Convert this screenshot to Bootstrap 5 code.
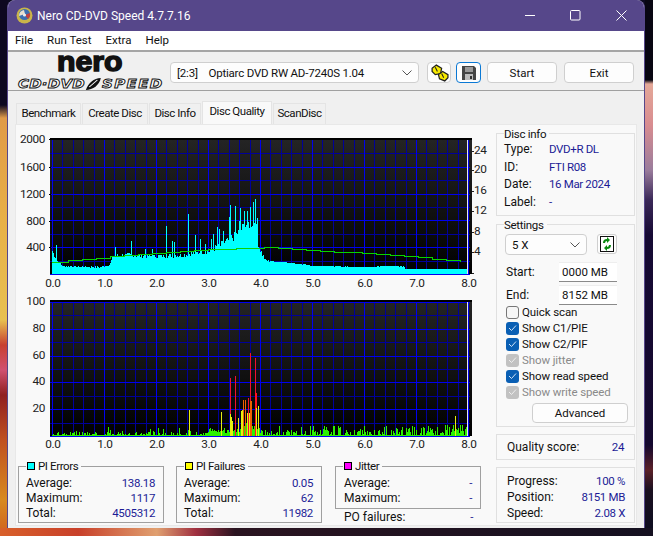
<!DOCTYPE html>
<html lang="en">
<head>
<meta charset="utf-8">
<title>Nero CD-DVD Speed</title>
<link href="https://cdn.jsdelivr.net/npm/bootstrap@5.3.0/dist/css/bootstrap.min.css" rel="stylesheet">
<style>
html,body{height:536px;overflow:hidden}
body{width:653px;font:12px/16px Roboto,"Liberation Sans",sans-serif;color:#111;background-color:#0c0a20;background-repeat:no-repeat;
background-image:
linear-gradient(90deg,#d8602a 0,#c8402a 12%,#e0a070 24%,#a03040 30%,#2a1420 36%,#141020 100%),
linear-gradient(180deg,#0d0820 0,#0d0820 105px,#e09a48 118px,#e8b048 220px,#e8c050 320px,#c84030 345px,#d05070 370px,#901f20 395px,#c05020 440px,#d88a20 500px,#d06020 536px),
linear-gradient(180deg,#080612 0,#080612 80px,#e4a898 84px,#d88c90 125px,#9a7c9c 170px,#3a2858 200px,#160a34 235px,#14082e 445px,#5a2028 470px,#1a1020 490px,#0c0c20 536px);
background-size:653px 8px,8px 536px,8px 536px;background-position:0 528px,0 0,645px 0}
.app-win{margin-left:7px;width:638px;height:528px;background:#f0f0f0;border-radius:8px 8px 0 0;overflow:hidden;border:solid #56478a;border-width:0 1px}
.title-row{height:31px;background:#56478a;color:#fff;font-size:12px;padding-left:8px;flex:none}
.win-ctl{width:45.5px;height:31px}
.menu-row{height:21px;background:#fff;border-bottom:2px solid #a5a5a5;gap:14px;padding-left:7px;font-size:11.5px;line-height:18px;flex:none}
.tool-row{height:39px;border-bottom:1px solid #a0a0a0;padding-top:3px;flex:none}
.logo-box{width:162px;position:relative;height:34px;align-self:flex-start;margin-top:-3px}
.logo-nero{position:absolute;left:49px;top:1px;font:900 28px/18px "Liberation Sans",sans-serif;color:#111;-webkit-text-stroke:1.500px #111;transform:scaleX(1.08);transform-origin:left center}
.logo-cd{position:absolute;left:10px;top:25px;font:italic 700 13px/12px "DejaVu Sans",sans-serif;color:#fff;-webkit-text-stroke:.9px #111;white-space:nowrap;transform:scaleX(1.15);transform-origin:left center}
.logo-cd1{letter-spacing:.2px}
.logo-cd2{letter-spacing:1.2px}
.fake-ctl{height:21px;background:#fdfdfd;border:1px solid #cfcfcf;border-radius:4px;color:#111;font-size:11.5px;line-height:20px}
.combo{width:249px;padding:0 6px;font-size:11.5px}
.combo-txt{letter-spacing:-.2px}
.ico-btn{width:24px;margin-left:8px}
.ico-btn.on{width:25px;border:1.5px solid #0a78d4;margin-left:5px}
.act-btn{width:70px;margin-left:6px}
.act-btn.lastb{margin-left:7px}
.tab-row{height:33px;padding:12px 0 0 8px;flex:none}
.tabbie{height:21px;background:#f0f0f0;border:1px solid #e4e4e4;border-bottom:0;margin-right:1px;line-height:19px;font-size:11.5px;letter-spacing:-.45px;text-align:center}
.tabbie.on{height:23px;background:#f9f9f9;margin-top:-2px;position:relative;z-index:1}
.t-a{width:65px}.t-b{width:66px}.t-c{width:52px}.t-d{width:70px}.t-e{width:53px}
.main-pane{margin-left:7px;width:622px;height:402px;background:#f9f9f9;border:1px solid #e8e8e8;flex:none}
.left-side{width:480px}
.chart-svg{display:block;overflow:visible}
.stat-row{gap:12px;padding-left:2px;margin-top:6px}
.grp-box{position:relative;width:146px;height:57px;border:1px solid #a0a0a0;padding:9px 8px 0 7px}
.grp-box.short{height:43px;padding-left:8px}
.grp-shift{margin-left:1px}
.grp-legend{position:absolute;left:7px;top:-8px;background:#f9f9f9;padding:0 3px 0 0;line-height:14px;font-size:11.5px;letter-spacing:-.4px}
.swatch{display:inline-block;width:8px;height:8px;border:1px solid #000;margin:0 3px 0 1px}
.kv{height:15px;line-height:15px}
.kv-val{color:#1c1c96;font-size:11.5px;letter-spacing:-.35px}
.po-line{width:146px;padding:1px 8px 0 9px;height:16px}
.right-side{width:139px}
.sec-box{border:1px solid #e0e0e0;position:relative;width:139px}
.sec-title{position:absolute;left:7px;top:-7px;background:#f9f9f9;padding:0 3px 0 0;line-height:14px;font-size:11.5px;letter-spacing:-.3px}
.info-line{height:17.700px;line-height:17.700px;padding-left:7px}
.info-key{width:45px}
.box-info{height:83px;margin-top:8px;padding-top:7px}
.box-set{height:203px;margin-top:8px;padding:9px 8px}
.spd{width:82px;padding:0 6px}
.ref-btn{width:20px;height:20px;margin-left:10px;border:1px solid #cfcfcf;border-radius:3px;background:#fdfdfd}
.speed-line{margin-bottom:5px}
.in-line{height:23px;padding:0 9px 0 1px}
.in-last{margin-bottom:-2px}
.fake-in{width:58px;height:20px;background:#fff;border-bottom:1px solid #8a8a8a;border-top:1px solid #eee;padding-left:3px;line-height:18px;font-size:11.5px}
.chk-line{height:16px;line-height:16px;margin-left:1px;font-size:11.5px;letter-spacing:-.1px}
.chk{width:13px;height:13px;border-radius:3px;margin-right:3px;flex:none}
.chk.off{border:1px solid #777;background:#f6f6f6}
.chk.blue{background:#0a5fb4}
.chk.gray{background:#c2c2c2}
.dim{color:#8a8a8a}
.adv{width:96px;height:20px;margin:3px 0 0 27px;line-height:18px}
.box-q{height:26px;margin-top:7px;padding:0 10px;line-height:25px}
.box-p{height:56px;margin-top:7px;padding:5px 9px 0 10px}
.box-p .kv{height:16px;line-height:16px}
</style>
</head>
<body>
<div class="app-win d-flex flex-column">
  <div class="title-row d-flex align-items-center">
    <svg width="17" height="17" viewBox="0 0 17 17" class="me-1"><circle cx="8.500" cy="8.500" r="8" fill="#c9b54a"/><circle cx="8.500" cy="7.500" r="5.500" fill="#3d6fb0"/><path d="M3 9a6 6 0 0 1 5-6l1 4z" fill="#e8e0d0"/><path d="M9 8l5-2a6 6 0 0 1-2 6z" fill="#c04040"/><circle cx="8.500" cy="8" r="1.600" fill="#eee"/></svg>
    <span class="flex-grow-1">Nero CD-DVD Speed 4.7.7.16</span>
    <span class="win-ctl d-flex align-items-center justify-content-center"><svg width="11" height="11"><path d="M0 5.500h10" stroke="#fff"/></svg></span>
    <span class="win-ctl d-flex align-items-center justify-content-center"><svg width="11" height="11"><rect x=".5" y=".5" width="9.500" height="9.500" rx="1" fill="none" stroke="#fff"/></svg></span>
    <span class="win-ctl d-flex align-items-center justify-content-center"><svg width="11" height="11"><path d="M.5.500l10 10M10.500.500l-10 10" stroke="#fff"/></svg></span>
  </div>
  <div class="menu-row d-flex"><span>File</span><span>Run Test</span><span>Extra</span><span>Help</span></div>
  <div class="tool-row d-flex align-items-center">
    <div class="logo-box">
      <span class="logo-nero">nero</span>
      <span class="logo-cd"><span class="logo-cd1">CD·DVD</span><svg width="15" height="14" viewBox="0 0 15 14" class="mx-0"><path d="M1 13C3 6 8 1 14 1 13 8 7 13 1 13z" fill="#111"/><path d="M4 10l7-7" stroke="#fff"/></svg><span class="logo-cd2">SPEED</span></span>
    </div>
    <div class="fake-ctl combo d-flex align-items-center justify-content-between"><span class="combo-txt">[2:3]&nbsp;&nbsp;&nbsp; Optiarc DVD RW AD-7240S 1.04</span><svg width="10" height="6"><path d="M.5.500l4.500 4.500 4.500-4.500" fill="none" stroke="#555"/></svg></div>
    <div class="fake-ctl ico-btn d-flex align-items-center justify-content-center"><svg width="19" height="18" viewBox="0 0 18 17"><g fill="#f7ea00" stroke="#222" stroke-width="1.200"><path d="M2 4l4-3 5 3-1 5-5 1-3-3z"/><path d="M8 10l4-3 5 3v3l-3 3-5-2z"/></g><path d="M5 3l2 4M11 9l2 4" stroke="#222"/></svg></div>
    <div class="fake-ctl ico-btn on d-flex align-items-center justify-content-center"><svg width="14" height="14" viewBox="0 0 14 14"><path d="M0 0h12l2 2v12H0z" fill="#444"/><rect x="3" y="1" width="8" height="5" fill="#999"/><rect x="3" y="8" width="8" height="6" fill="#bbb"/><rect x="8" y="10" width="2" height="3" fill="#333"/></svg></div>
    <div class="fake-ctl act-btn text-center">Start</div>
    <div class="fake-ctl act-btn lastb text-center">Exit</div>
  </div>
  <div class="tab-row d-flex">
    <span class="tabbie t-a">Benchmark</span><span class="tabbie t-b">Create Disc</span><span class="tabbie t-c">Disc Info</span><span class="tabbie t-d on">Disc Quality</span><span class="tabbie t-e">ScanDisc</span>
  </div>
  <div class="main-pane d-flex">
    <div class="left-side">
      <svg id="c1" class="chart-svg" width="480" height="171" viewBox="16 125 480 171"></svg>
      <svg id="c2" class="chart-svg" width="480" height="164" viewBox="16 296 480 164"></svg>
      <div class="stat-row d-flex">
        <div class="grp-box">
          <div class="grp-legend"><i class="swatch" style="background:#00ffff"></i>PI Errors</div>
          <div class="kv d-flex justify-content-between"><span>Average:</span><span class="kv-val">138.18</span></div>
          <div class="kv d-flex justify-content-between"><span>Maximum:</span><span class="kv-val">1117</span></div>
          <div class="kv d-flex justify-content-between"><span>Total:</span><span class="kv-val">4505312</span></div>
        </div>
        <div class="grp-box">
          <div class="grp-legend"><i class="swatch" style="background:#ffff00"></i>PI Failures</div>
          <div class="kv d-flex justify-content-between"><span>Average:</span><span class="kv-val">0.05</span></div>
          <div class="kv d-flex justify-content-between"><span>Maximum:</span><span class="kv-val">62</span></div>
          <div class="kv d-flex justify-content-between"><span>Total:</span><span class="kv-val">11982</span></div>
        </div>
        <div class="grp-shift">
          <div class="grp-box short">
            <div class="grp-legend"><i class="swatch" style="background:#ff00ff"></i>Jitter</div>
            <div class="kv d-flex justify-content-between"><span>Average:</span><span class="kv-val">-</span></div>
            <div class="kv d-flex justify-content-between"><span>Maximum:</span><span class="kv-val">-</span></div>
          </div>
          <div class="po-line kv d-flex justify-content-between"><span>PO failures:</span><span class="kv-val">-</span></div>
        </div>
      </div>
    </div>
    <div class="right-side">
      <div class="sec-box box-info">
        <div class="sec-title">Disc info</div>
        <div class="info-line d-flex"><span class="info-key">Type:</span><span class="kv-val">DVD+R DL</span></div>
        <div class="info-line d-flex"><span class="info-key">ID:</span><span class="kv-val">FTI R08</span></div>
        <div class="info-line d-flex"><span class="info-key">Date:</span><span class="kv-val">16 Mar 2024</span></div>
        <div class="info-line d-flex"><span class="info-key">Label:</span><span class="kv-val">-</span></div>
      </div>
      <div class="sec-box box-set">
        <div class="sec-title">Settings</div>
        <div class="d-flex speed-line">
          <div class="fake-ctl spd d-flex align-items-center justify-content-between"><span>5 X</span><svg width="10" height="6"><path d="M.5.500l4.500 4.500 4.500-4.500" fill="none" stroke="#555"/></svg></div>
          <div class="ref-btn d-flex align-items-center justify-content-center"><svg width="14" height="16" viewBox="0 0 14 16"><rect x=".5" y=".5" width="13" height="15" fill="#fff" stroke="#111"/><path d="M3 7a4 4 0 0 1 4-4V1l3 3-3 3V5a2 2 0 0 0-2 2zM11 9a4 4 0 0 1-4 4v2l-3-3 3-3v2a2 2 0 0 0 2-2z" fill="#0a8a10"/></svg></div>
        </div>
        <div class="in-line d-flex align-items-center justify-content-between"><span>Start:</span><span class="fake-in">0000 MB</span></div>
        <div class="in-line in-last d-flex align-items-center justify-content-between"><span>End:</span><span class="fake-in">8152 MB</span></div>
        <div class="chk-line d-flex align-items-center"><span class="chk off"></span><span>Quick scan</span></div>
        <div class="chk-line d-flex align-items-center"><span class="chk blue d-flex align-items-center justify-content-center"><svg width="9" height="8"><path d="M1 4l2.500 2.500L8 1.500" fill="none" stroke="#cfe3f7"/></svg></span><span>Show C1/PIE</span></div>
        <div class="chk-line d-flex align-items-center"><span class="chk blue d-flex align-items-center justify-content-center"><svg width="9" height="8"><path d="M1 4l2.500 2.500L8 1.500" fill="none" stroke="#cfe3f7"/></svg></span><span>Show C2/PIF</span></div>
        <div class="chk-line d-flex align-items-center dim"><span class="chk gray d-flex align-items-center justify-content-center"><svg width="9" height="8"><path d="M1 4l2.500 2.500L8 1.500" fill="none" stroke="#eee"/></svg></span><span>Show jitter</span></div>
        <div class="chk-line d-flex align-items-center"><span class="chk blue d-flex align-items-center justify-content-center"><svg width="9" height="8"><path d="M1 4l2.500 2.500L8 1.500" fill="none" stroke="#cfe3f7"/></svg></span><span>Show read speed</span></div>
        <div class="chk-line d-flex align-items-center dim"><span class="chk gray d-flex align-items-center justify-content-center"><svg width="9" height="8"><path d="M1 4l2.500 2.500L8 1.500" fill="none" stroke="#eee"/></svg></span><span>Show write speed</span></div>
        <div class="fake-ctl adv text-center">Advanced</div>
      </div>
      <div class="sec-box box-q d-flex justify-content-between"><span>Quality score:</span><span class="kv-val">24</span></div>
      <div class="sec-box box-p">
        <div class="kv d-flex justify-content-between"><span>Progress:</span><span class="kv-val">100 %</span></div>
        <div class="kv d-flex justify-content-between"><span>Position:</span><span class="kv-val">8151 MB</span></div>
        <div class="kv d-flex justify-content-between"><span>Speed:</span><span class="kv-val">2.08 X</span></div>
      </div>
    </div>
  </div>
</div>
<script src="https://cdn.jsdelivr.net/npm/bootstrap@5.3.0/dist/js/bootstrap.bundle.min.js"></script>
<script>
(function(){
var x0=52,ux=52;
function rnd(s){var v=s;return function(){v=(v*9301+49297)%233280;return v/233280;};}
function lerp(t,u){if(u<=t[0][0])return t[0][1];for(var i=1;i<t.length;i++){if(u<=t[i][0]){var a=t[i-1],b=t[i];return a[1]+(b[1]-a[1])*(u-a[0])/(b[0]-a[0]);}}return t[t.length-1][1];}
function grid(id,top,bot,skipTop){
  var s='<defs><linearGradient id="'+id+'g" x1="0" y1="0" x2="0" y2="1"><stop offset="0" stop-color="#242424"/><stop offset="1" stop-color="#000"/></linearGradient></defs>';
  s+='<rect x="50" y="'+(top-2)+'" width="422" height="'+(bot-top+2)+'" fill="#000"/><rect x="50" y="'+top+'" width="422" height="'+(bot-top)+'" fill="url(#'+id+'g)"/>';
  var g='';
  for(var i=0;i<=40;i++){var x=Math.round(x0+i*10.4);if(i%5)g+='<path d="M'+x+'.5 '+top+'V'+bot+'" stroke="#00009a"/>';}
  var n=10;
  for(var j=0;j<=n;j++){ if(j==n&&skipTop)continue;
    var y=Math.round(bot-j*(bot-top)/n);
    g+='<path d="M50 '+y+'.5H470" stroke="'+(j%2?'#00009a':'#0000f0')+'"/>';}
  for(i=0;i<=8;i++){x=x0+i*ux;g+='<path d="M'+x+'.5 '+top+'V'+bot+'" stroke="#0000f0" stroke-width="1.600"/>';}
  return s+'<g shape-rendering="crispEdges">'+g+'</g>';
}
function txt(x,y,t,anchor){return '<text x="'+x+'" y="'+y+'" text-anchor="'+(anchor||'end')+'" font-family="Roboto,Liberation Sans,sans-serif" font-size="11.800" letter-spacing="-.35" fill="#222">'+t+'</text>';}
/* chart 1 */
var top1=140,bot1=274,k1=26.7/400;
var s=grid('a',top1,bot1,true);
var env=[[0,350],[.08,220],[.2,120],[.9,105],[1.1,140],[1.18,280],[1.5,290],[2,270],[2.5,290],[2.8,330],[3,340],[3.3,470],[3.5,580],[3.7,740],[3.9,820],[3.97,420],[4.03,315],[4.1,210],[4.3,190],[4.5,180],[5,125],[6,105],[6.5,125],[6.75,115],[6.8,75],[8,75]];
var spikes={0.07:440,1.22:410,1.52:490,1.78:380,1.93:380,2.2:720,2.3:500,2.34:480,2.62:900,2.75:590,2.85:530,2.95:450,3.05:530,3.1:600,3.17:700,3.22:680,3.28:640,3.4:860,3.42:1040,3.52:1020,3.6:800,3.62:990,3.7:950,3.75:950,3.81:1000,3.86:1080,3.9:1117,3.94:840};
var r=rnd(7),p='';
for(var x=52;x<468;x++){
  var u=(x-x0)/ux,v=lerp(env,u)*(u<4.2?(.86+r()*.24):(.95+r()*.08));
  for(var k in spikes){if(Math.abs(+k-u)<.0097)v=Math.max(v,spikes[k]);}
  p+='M'+x+'.5 '+bot1+'V'+(bot1-v*k1).toFixed(1);
}
s+='<path d="'+p+'" stroke="#00ffff" stroke-width="1" shape-rendering="crispEdges"/>';
var sp=[[52,262],[104,256.7],[156,252.7],[208,249],[261,247.5],[275,247.3],[314,250.7],[366,253.3],[418,257.3],[465,262.3]],d='M52 262';
for(x=54;x<=465;x+=14){var y=Math.round(lerp(sp,x));d+='H'+x+'V'+y;}
s+='<path d="'+d+'" fill="none" stroke="#08d400" stroke-width="1" shape-rendering="crispEdges"/>';
s+='<path d="M467.500 '+top1+'V'+bot1+'" stroke="#e8e8e8" shape-rendering="crispEdges"/>';
[[2000,139],[1600,167],[1200,194],[800,221],[400,247]].forEach(function(a){s+='<path d="M49 '+a[1]+'.5h2" stroke="#000" shape-rendering="crispEdges"/>'+txt(45,a[1]+4,a[0]);});
[[24,151],[20,170],[16,191],[12,211],[8,232],[4,252],[0,273]].forEach(function(a){s+='<path d="M472 '+a[1]+'.5h2" stroke="#222" shape-rendering="crispEdges"/>';if(a[0])s+=txt(474,a[1]+3,a[0],'start');});
for(var i=0;i<=8;i++)s+=txt(x0+i*ux+1,287,i+'.0','middle');
document.getElementById('c1').innerHTML=s;
/* chart 2 */
var top2=302,bot2=436,k2=26.6/20;
s=grid('b',top2,bot2,false);
r=rnd(31);p='';
for(x=52;x<468;x++){
  u=(x-x0)/ux;
  var q=r(),base;
  if(u<3)base=q<.45?.8:q<.9?1+r()*2:3+r()*4;
  else if(u<3.6)base=2+r()*4;
  else if(u<4)base=4+r()*6;
  else if(u<6.8)base=q<.45?.7:q<.85?1+r()*4:4+r()*4;
  else base=q<.35?1:2+r()*7;
  p+='M'+x+'.5 '+bot2+'V'+(bot2-base*k2).toFixed(1);
}
s+='<path d="'+p+'" stroke="#2cf000" stroke-width="1" shape-rendering="crispEdges"/>';
function spk(list,c){var o='';list.forEach(function(a){o+='M'+a[0]+'.5 '+bot2+'V'+a[1];});return '<path d="'+o+'" stroke="'+c+'" stroke-width="1" shape-rendering="crispEdges"/>';}
s+=spk([[230,378],[235,376],[248,398],[250,353],[255,358]],'#f01030');
s+=spk([[243,400],[245,400],[250,401],[251,401]],'#f06000');
s+=spk([[255,393],[256,393]],'#ff1020');
s+=spk([[189,410],[221,412],[230,414],[231,417],[232,421],[238,418],[241,411],[242,410],[247,413],[249,413],[256,408],[258,406],[455,416]],'#e8ee10');
s+='<path d="M467.500 '+top2+'V'+bot2+'" stroke="#e8e8e8" shape-rendering="crispEdges"/>';
[[100,301],[80,328],[60,355],[40,381],[20,408]].forEach(function(a){s+=txt(45,a[1]+4,a[0]);});
for(i=0;i<=8;i++)s+=txt(x0+i*ux+1,448,i+'.0','middle');
document.getElementById('c2').innerHTML=s;
})();
</script>
</body>
</html>
